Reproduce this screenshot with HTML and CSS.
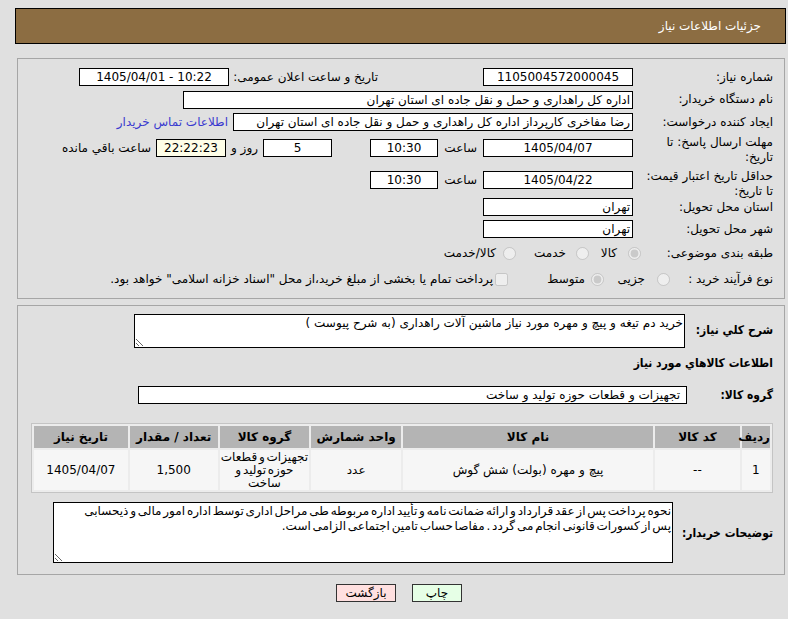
FILE: index.html
```html
<!DOCTYPE html>
<html lang="fa" dir="rtl">
<head>
  <meta charset="UTF-8" />
  <title>جزئیات اطلاعات نیاز</title>
  <link rel="stylesheet" href="styles.css">
</head>
<body>
  <div class="title-bar">جزئیات اطلاعات نیاز</div>

  <div class="panel info">
    <div class="row r1">
      <span class="lbl">شماره نیاز:</span>
      <span class="field w150 center">1105004572000045</span>
      <span class="lbl2">تاریخ و ساعت اعلان عمومی:</span>
      <span class="field w150 center pub" dir="ltr">1405/04/01 - 10:22</span>
    </div>
    <div class="row r2">
      <span class="lbl">نام دستگاه خریدار:</span>
      <span class="field w450">اداره کل راهداری و حمل و نقل جاده ای استان تهران</span>
    </div>
    <div class="row r3">
      <span class="lbl">ایجاد کننده درخواست:</span>
      <span class="field w400">رضا مفاخری کارپرداز اداره کل راهداری و حمل و نقل جاده ای استان تهران</span>
      <a class="contact" href="#">اطلاعات تماس خریدار</a>
    </div>
    <div class="row tall">
      <span class="lbl">مهلت ارسال پاسخ: تا تاریخ:</span>
      <span class="field w150 center">1405/04/07</span>
      <span class="unit">ساعت</span>
      <span class="field time center">10:30</span>
      <span class="field days center">5</span>
      <span class="unit-day">روز و</span>
      <span class="field remain center">22:22:23</span>
      <span class="remain-text">ساعت باقي مانده</span>
    </div>
    <div class="row tall short">
      <span class="lbl">حداقل تاریخ اعتبار قیمت: تا تاریخ:</span>
      <span class="field w150 center">1405/04/22</span>
      <span class="unit">ساعت</span>
      <span class="field time center">10:30</span>
    </div>
    <div class="row r6">
      <span class="lbl">استان محل تحویل:</span>
      <span class="field w150">تهران</span>
    </div>
    <div class="row r7">
      <span class="lbl">شهر محل تحویل:</span>
      <span class="field w150">تهران</span>
    </div>
    <div class="row r8">
      <span class="lbl">طبقه بندی موضوعی:</span>
      <input class="radio first" type="radio" name="cat" checked disabled>
      <span class="opt o1">كالا</span>
      <input class="radio" type="radio" name="cat" disabled>
      <span class="opt o2">خدمت</span>
      <input class="radio" type="radio" name="cat" disabled>
      <span class="opt o3">كالا/خدمت</span>
    </div>
    <div class="row r9">
      <span class="lbl-auto">نوع فرآیند خرید :</span>
      <input class="radio p1" type="radio" name="proc" disabled>
      <span class="opt p-o1">جزیی</span>
      <input class="radio p2" type="radio" name="proc" checked disabled>
      <span class="opt p-o2">متوسط</span>
      <input class="check" type="checkbox" disabled>
      <span class="opt p-o3">پرداخت تمام یا بخشی از مبلغ خرید،از محل "اسناد خزانه اسلامی" خواهد بود.</span>
    </div>
  </div>

  <div class="panel goods">
    <div class="row desc-row">
      <span class="blbl desc-lbl">شرح کلي نیاز:</span>
      <textarea class="area desc" readonly>خرید دم تیغه و پیچ و مهره مورد نیاز ماشین آلات راهداری (به شرح پیوست )</textarea>
    </div>
    <div class="row section">
      <span class="blbl">اطلاعات کالاهاي مورد نیاز</span>
    </div>
    <div class="row group-row">
      <span class="blbl group-lbl">گروه کالا:</span>
      <span class="field group">تجهیزات و قطعات حوزه تولید و ساخت</span>
    </div>

    <table class="items">
      <colgroup>
        <col class="c-idx"><col class="c-code"><col class="c-name"><col class="c-unit">
        <col class="c-group"><col class="c-qty"><col class="c-date">
      </colgroup>
      <thead>
        <tr>
          <th>ردیف</th>
          <th>کد کالا</th>
          <th>نام کالا</th>
          <th>واحد شمارش</th>
          <th>گروه کالا</th>
          <th>تعداد / مقدار</th>
          <th>تاریخ نیاز</th>
        </tr>
      </thead>
      <tbody>
        <tr>
          <td>1</td>
          <td>--</td>
          <td>پیچ و مهره (بولت) شش گوش</td>
          <td>عدد</td>
          <td class="wrap">تجهیزات و قطعات حوزه تولید و ساخت</td>
          <td>1,500</td>
          <td>1405/04/07</td>
        </tr>
      </tbody>
    </table>

    <div class="row note-row">
      <span class="blbl note-lbl">توضیحات خریدار:</span>
      <textarea class="area note" readonly>نحوه پرداخت پس از عقد قرارداد و ارائه ضمانت نامه و تأیید اداره مربوطه طی مراحل اداری توسط اداره امور مالی و ذیحسابی
پس از کسورات قانونی انجام می گردد . مفاصا حساب تامین اجتماعی الزامی است.</textarea>
    </div>
  </div>

  <div class="actions">
    <button class="btn print">چاپ</button>
    <button class="btn back">بازگشت</button>
  </div>
</body>
</html>
```

FILE: styles.css
```css
body {
  margin: 0;
  background: #e0e0e0;
  font-family: Tahoma, "DejaVu Sans", sans-serif;
  font-size: 12px;
  color: #000;
}
.title-bar {
  margin: 8px 2px 0 15px;
  height: 36px;
  box-sizing: border-box;
  background: #8c6d42;
  border: 1px solid #000;
  color: #fff;
  line-height: 34px;
  padding-right: 24px;
  font-size: 12px;
}
.panel {
  margin: 14px 3px 0 17px;
  border: 1px solid #a6a6a6;
  padding: 0 11px 0 0;
}
.info {
  padding-top: 7px;
  padding-bottom: 6px;
}
.row {
  display: flex;
  align-items: center;
  white-space: nowrap;
}
.r1 { height: 22px; }
.r2 { height: 23px; }
.r3 { height: 22px; }
.tall {
  height: 32px;
  align-items: flex-start;
}
.tall.short { height: 31px; }
.r6, .r7 { height: 22px; }
.r8 { height: 26px; }
.r9 { height: 26px; }
.lbl {
  width: 133px;
  flex: none;
  white-space: normal;
  line-height: 15px;
}
.tall .lbl { padding-top: 2px; }
.tall.short .lbl { padding-top: 4px; }
.tall .field { margin-top: 6px; }
.tall .unit, .tall .unit-day, .tall .remain-text { margin-top: 8px; }
.field {
  flex: none;
  height: 18px;
  box-sizing: border-box;
  border: 1px solid #000;
  background: #fff;
  line-height: 16px;
  padding: 0 2px;
  overflow: hidden;
  margin-right: 7px;
}
.center { text-align: center; }
.w150 { width: 150px; }
.w450 { width: 450px; }
.w400 { width: 400px; }
.lbl2 {
  width: 140px;
  margin-right: 105px;
}
.pub { margin-right: 9px; }
.contact {
  margin-right: 5px;
  color: #3a3acf;
  text-decoration: none;
}
.unit {
  width: 31px;
  margin-right: 6px;
}
.time {
  width: 68px;
  margin-right: 8px;
}
.days {
  width: 69px;
  margin-right: 38px;
}
.unit-day {
  width: 23px;
  margin-right: 5px;
}
.remain {
  width: 70px;
  margin-right: 9px;
  background: #fefee8;
}
.remain-text { margin-right: 5px; }
.radio, .check {
  flex: none;
  width: 13px;
  height: 13px;
  margin: 0;
}
.radio.first { margin-right: -1px; }
.opt { flex: none; }
.o1 { width: 28px; margin-right: 11px; }
.o2 { width: 50px; margin-right: 10px; }
.o3 { margin-right: 7px; }
.lbl-auto { width: 86px; flex: none; }
.p1 { margin-right: 17px; }
.p-o1 { width: 40px; margin-right: 12px; }
.p2 { margin-right: 1px; }
.p-o2 { width: 77px; margin-right: 6px; }
.p-o3 { margin-right: 2px; }

.goods {
  margin-top: 6px;
  padding-bottom: 11px;
}
.blbl {
  font-family: "DejaVu Sans Condensed", Tahoma, "DejaVu Sans", sans-serif;
  font-weight: bold;
  font-size: 12px;
  flex: none;
}
.desc-row {
  height: 42px;
  align-items: flex-end;
}
.desc-lbl {
  width: 88px;
  align-self: center;
  padding-top: 6px;
}
.area {
  box-sizing: border-box;
  border: 1px solid #000;
  background: #fff;
  font-family: Tahoma, "DejaVu Sans", sans-serif;
  font-size: 12px;
  line-height: 15px;
  padding: 1px 1px;
  margin: 0;
  direction: rtl;
  overflow: hidden;
  white-space: pre-wrap;
}
.desc {
  width: 551px;
  height: 34px;
}
.section { height: 30px; }
.group-row { height: 34px; }
.group-lbl { width: 86px; }
.group {
  width: 549px;
  margin-right: 0;
  padding-right: 6px;
}
.items {
  margin: 11px 0 0 13px;
  width: 742px;
  table-layout: fixed;
  border: 1px solid #c4c4c4;
  border-spacing: 2px;
  background: #ececec;
  font-size: 12px;
}
.items th {
  background: #b4b4b4;
  height: 22px;
  font-weight: bold;
  padding: 0;
}
.items td {
  background: #f6f6f6;
  height: 40px;
  text-align: center;
  padding: 0 1px;
  line-height: 13px;
}
.items td.wrap {
  padding: 0;
  word-spacing: -2px;
}
.c-idx { width: 28px; }
.c-code { width: 84px; }
.c-name { width: 248px; }
.c-unit { width: 89px; }
.c-group { width: 89px; }
.c-qty { width: 87px; }
.c-date { width: 93px; }
.note-row {
  margin-top: 9px;
  height: 61px;
  align-items: center;
}
.note-lbl { width: 100px; }
.note {
  width: 620px;
  height: 61px;
  white-space: pre;
  word-spacing: -2px;
}
.actions {
  display: flex;
  justify-content: center;
  gap: 16px;
  margin-top: 9px;
  padding-left: 10px;
}
.btn {
  height: 18px;
  box-sizing: border-box;
  border: 1px solid #333;
  font-family: Tahoma, "DejaVu Sans", sans-serif;
  font-size: 12px;
  padding: 0;
  line-height: 15px;
  cursor: pointer;
}
.print {
  width: 50px;
  background: #e6ffe6;
}
.back {
  width: 60px;
  background: #ffe0e0;
}
```
